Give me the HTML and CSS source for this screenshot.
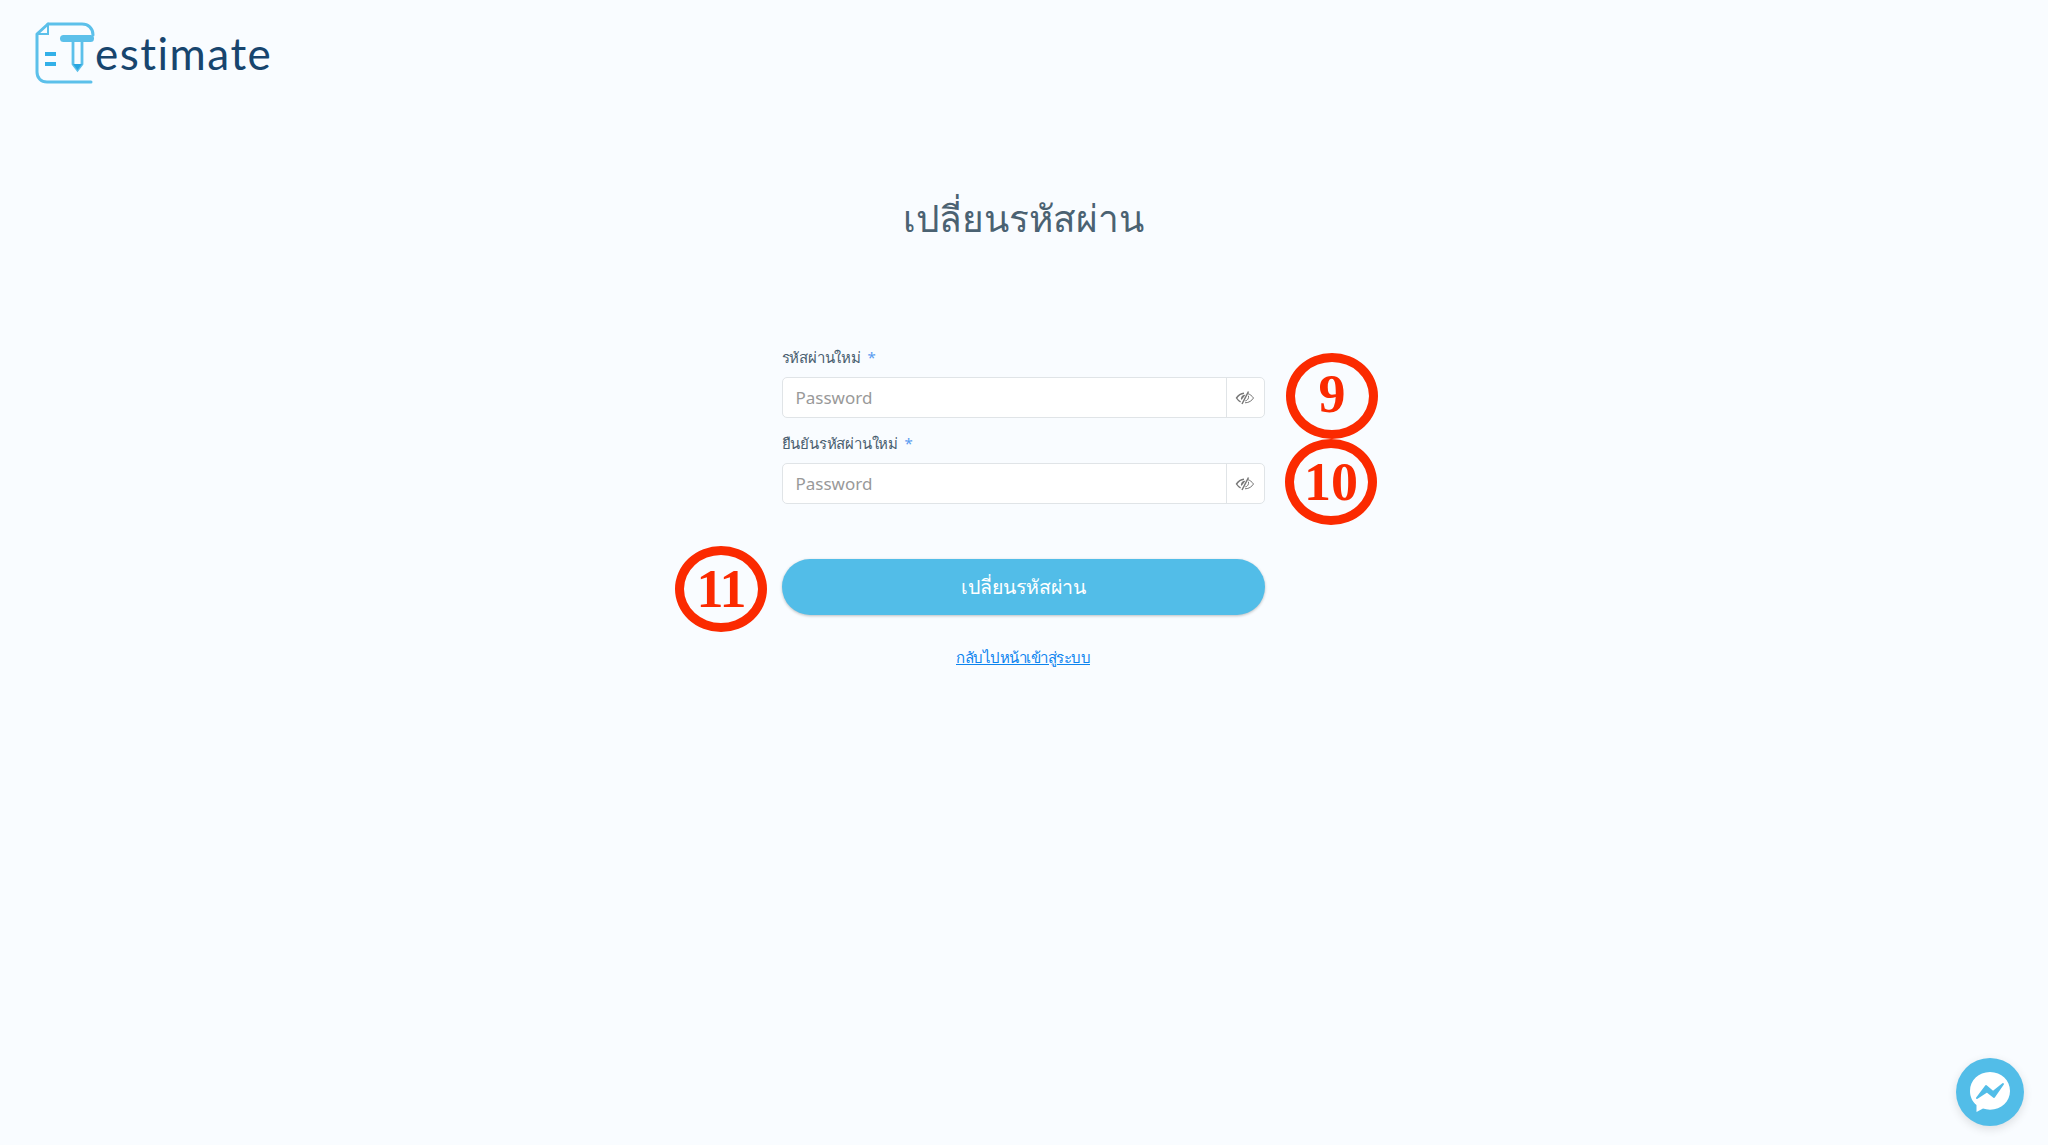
FILE: index.html
```html
<!DOCTYPE html>
<html lang="th">
<head>
  <meta charset="UTF-8">
  <meta name="viewport" content="width=device-width, initial-scale=1.0">
  <title>เปลี่ยนรหัสผ่าน - Testimate</title>
  <link rel="stylesheet" href="styles.css">
</head>
<body>
  <header class="top">
    <a href="#" class="logo">
      <svg class="logo-icon" width="60" height="62" viewBox="0 0 60 62" fill="none">
        <path d="M13 2H47C53 2 58 6 58 13" stroke="#5cc0ea" stroke-width="3" stroke-linecap="round"/>
        <path d="M13 2L2 12V50C2 56 6 60 12 60H56" stroke="#5cc0ea" stroke-width="3" stroke-linecap="round" stroke-linejoin="round"/>
        <path d="M13 2V12H2" stroke="#5cc0ea" stroke-width="2"/>
        <rect x="25" y="13" width="34" height="7" rx="3.500" fill="#5cc0ea"/>
        <path d="M38 20V42L42.500 48L47 42V20" stroke="#5cc0ea" stroke-width="2.800"/>
        <path d="M38 42H47L42.500 48Z" fill="#2aa6e0"/>
        <rect x="10" y="30" width="11" height="4" fill="#33b0e8"/>
        <rect x="10" y="40" width="11" height="4" fill="#33b0e8"/>
      </svg>
      <span class="logo-text">estimate</span>
    </a>
  </header>

  <main class="page">
    <h1 class="title">เปลี่ยนรหัสผ่าน</h1>
    <form class="form">
      <div class="field">
        <label for="newPassword">รหัสผ่านใหม่ <span class="req">*</span></label>
        <div class="input-group">
          <input type="password" id="newPassword" placeholder="Password">
          <button type="button" class="eye">
            <svg width="20" height="16" viewBox="0 0 20 16" fill="none">
              <path d="M9 3.200C5.800 3.500 3.200 5.400 1.500 8C2.500 9.600 3.900 11 5.600 11.900" stroke="#777" stroke-width="1.400"/>
              <path d="M12.500 3.500C15 4.200 17 5.900 18.500 8C16.800 10.700 14 12.800 10 12.800" stroke="#777" stroke-width="1"/>
              <path d="M10.500 4.800C8 4.600 6 6.200 6 8.300C6 9 6.200 9.600 6.500 10.100Z" fill="#777"/>
              <path d="M13.500 5.800C14 8.500 12.500 10.500 10.300 10.900" stroke="#777" stroke-width="1"/>
              <path d="M13.500 1.500L7 14" stroke="#777" stroke-width="1.500"/>
            </svg>
          </button>
        </div>
      </div>
      <div class="field">
        <label for="confirmPassword">ยืนยันรหัสผ่านใหม่ <span class="req">*</span></label>
        <div class="input-group">
          <input type="password" id="confirmPassword" placeholder="Password">
          <button type="button" class="eye">
            <svg width="20" height="16" viewBox="0 0 20 16" fill="none">
              <path d="M9 3.200C5.800 3.500 3.200 5.400 1.500 8C2.500 9.600 3.900 11 5.600 11.900" stroke="#777" stroke-width="1.400"/>
              <path d="M12.500 3.500C15 4.200 17 5.900 18.500 8C16.800 10.700 14 12.800 10 12.800" stroke="#777" stroke-width="1"/>
              <path d="M10.500 4.800C8 4.600 6 6.200 6 8.300C6 9 6.200 9.600 6.500 10.100Z" fill="#777"/>
              <path d="M13.500 5.800C14 8.500 12.500 10.500 10.300 10.900" stroke="#777" stroke-width="1"/>
              <path d="M13.500 1.500L7 14" stroke="#777" stroke-width="1.500"/>
            </svg>
          </button>
        </div>
      </div>
      <button type="submit" class="submit">เปลี่ยนรหัสผ่าน</button>
      <a href="#" class="back">กลับไปหน้าเข้าสู่ระบบ</a>
    </form>
  </main>

  <!-- red step markers on top of the screenshot -->
  <div class="mark mark-9"><span>9</span></div>
  <div class="mark mark-10">10</div>
  <div class="mark mark-11">11</div>

  <a href="#" class="chat">
    <svg width="46" height="46" viewBox="0 0 46 46">
      <path d="M23 3C11.500 3 3 11.300 3 22C3 27.800 5.400 32.700 9.500 36.100V43L16 39.600C18.100 40.300 20.500 40.700 23 40.700C34.500 40.700 43 32.500 43 22C43 11.300 34.500 3 23 3Z" fill="#fff"/>
      <path d="M10 29L19 17L26 23L36 15L27 28L20 22.500Z" fill="#52bde8" stroke="#52bde8" stroke-width="2" stroke-linejoin="round"/>
    </svg>
  </a>
</body>
</html>
```

FILE: styles.css
```css
html, body {
  height: 100%;
}
body {
  margin: 0;
  padding: 0;
  background-color: #f9fcff;
  font-family: 'Noto Sans', 'Open Sans', sans-serif;
  color: #4a6070;
  position: relative;
  overflow: hidden;
}
.top {
  padding: 22px 35px 0;
  height: 62px;
}
.logo {
  display: inline-flex;
  align-items: flex-end;
  text-decoration: none;
}
.logo-text {
  font-family: 'Lato', sans-serif;
  font-size: 44px;
  line-height: 56px;
  letter-spacing: 1.5px;
  color: #17456e;
  margin-bottom: 3px;
}
.page {
  display: flex;
  flex-direction: column;
  align-items: center;
  padding-right: 2px;
}
.title {
  margin: 105px 0 0;
  font-size: 37px;
  line-height: 58px;
  font-weight: 500;
  color: #4b6272;
}
.form {
  width: 483px;
  margin-top: 98px;
  display: flex;
  flex-direction: column;
}
.field {
  margin-bottom: 13px;
}
.field label {
  display: block;
  font-size: 15px;
  letter-spacing: -0.2px;
  line-height: 24px;
  height: 32px;
  color: #4a6070;
}
.req {
  color: #5a9bf0;
  margin-left: 3px;
}
.input-group {
  display: flex;
  height: 41px;
  box-sizing: border-box;
  border: 1px solid #e0e4e7;
  border-radius: 5px;
  background-color: white;
  overflow: hidden;
}
.input-group input {
  flex: 1;
  min-width: 0;
  border: none;
  outline: none;
  padding: 0 13px;
  font-family: 'Noto Sans', sans-serif;
  font-size: 17px;
  background: transparent;
}
.input-group input::placeholder {
  color: #999;
}
.eye {
  width: 38px;
  border: none;
  border-left: 1px solid #e0e4e7;
  background: transparent;
  padding: 0;
  display: flex;
  align-items: center;
  justify-content: center;
}
.submit {
  margin-top: 42px;
  height: 56px;
  border: none;
  border-radius: 28px;
  background-color: #52bde8;
  color: white;
  font-family: 'Noto Sans', sans-serif;
  font-size: 19.5px;
  box-shadow: 0 1px 3px rgba(0, 0, 0, 0.25);
}
.back {
  margin-top: 29px;
  text-align: center;
  font-size: 15px;
  letter-spacing: -0.5px;
  line-height: 26px;
  color: #0d84ef;
}
.mark {
  position: absolute;
  width: 92px;
  height: 86px;
  box-sizing: border-box;
  border: 9px solid #fb2a00;
  border-radius: 50%;
  display: flex;
  align-items: center;
  justify-content: center;
  font-family: 'Liberation Serif', serif;
  font-weight: 700;
  font-size: 54px;
  color: #fb2a00;
  line-height: 1;
}
.mark-9 {
  left: 1286px;
  top: 353px;
}
.mark-9 span {
  margin-bottom: 4px;
}
.mark-10 {
  left: 1285px;
  top: 439px;
}
.mark-11 {
  left: 675px;
  top: 546px;
  letter-spacing: -1px;
}
.chat {
  position: absolute;
  left: 1956px;
  top: 1058px;
  width: 68px;
  height: 68px;
  border-radius: 50%;
  background-color: #52bde8;
  box-shadow: 0 3px 10px rgba(0, 0, 0, 0.12);
  display: flex;
  align-items: center;
  justify-content: center;
}
```
